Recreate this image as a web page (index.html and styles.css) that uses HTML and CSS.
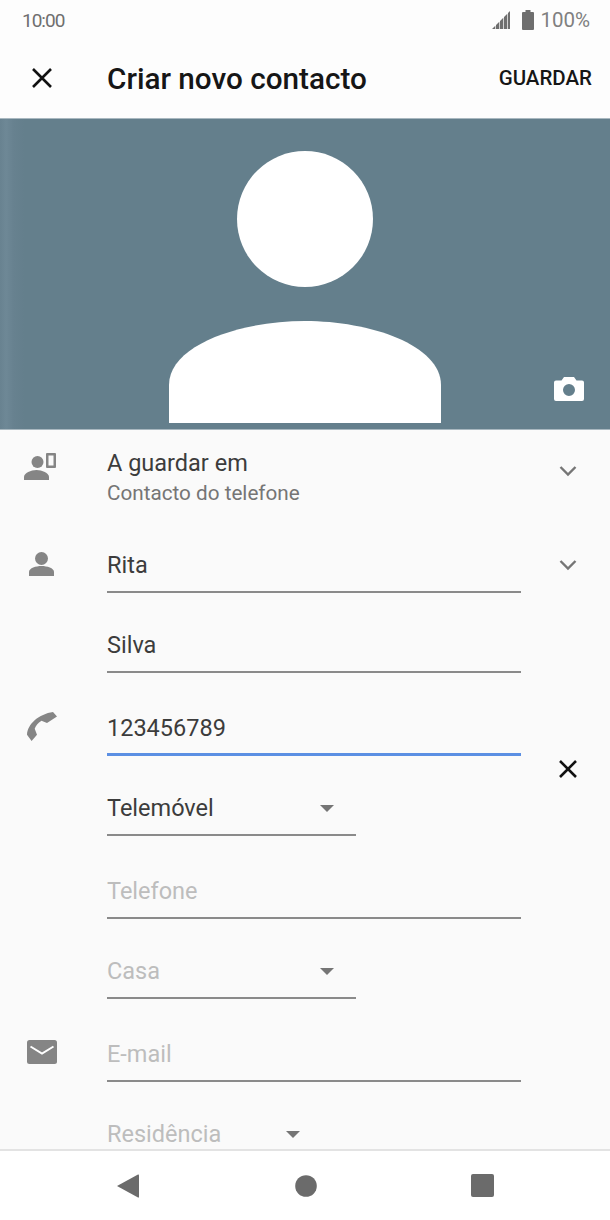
FILE: index.html
```html
<!DOCTYPE html>
<html>
<head>
  <meta charset="utf-8">
  <title>Criar novo contacto</title>
  <link rel="stylesheet" href="styles.css">
</head>
<body>
<div class="phone">
  <div class="statusbar">
    <span class="time">10:00</span>
    <div class="status-right">
      <svg class="sig" width="18" height="18" viewBox="0 0 18 18">
        <path d="M0 18 L3.300 14.700 V18 Z M4 14 L7.300 10.700 V18 H4 Z M8 10 L11.300 6.700 V18 H8 Z M12 6 L15.300 2.700 V18 H12 Z M16 2 L18 0 V18 H16 Z" fill="#6e6e6e"/>
      </svg>
      <svg class="batt" width="12" height="20" viewBox="0 0 12 20">
        <path d="M3.500 0 H8.500 V2 H11 Q12 2 12 3 V19 Q12 20 11 20 H1 Q0 20 0 19 V3 Q0 2 1 2 H3.500 Z" fill="#6e6e6e"/>
      </svg>
      <span class="pct">100%</span>
    </div>
  </div>

  <div class="toolbar">
    <svg class="close" width="22" height="22" viewBox="0 0 22 22">
      <path d="M2 2 L20 20 M20 2 L2 20" stroke="#111" stroke-width="2.600" fill="none"/>
    </svg>
    <h1 class="title">Criar novo contacto</h1>
    <span class="save">GUARDAR</span>
  </div>

  <div class="hero">
    <svg class="avatar" width="272" height="272" viewBox="0 0 272 272">
      <circle cx="136" cy="68" r="68" fill="#fff"/>
      <path d="M0 272 V234 C0 194 71 170 136 170 C201 170 272 194 272 234 V272 Z" fill="#fff"/>
    </svg>
    <svg class="camera" width="30" height="24" viewBox="0 0 30 24">
      <path fill-rule="evenodd" d="M10 0 H20 L22.500 3.500 H28 Q30 3.500 30 5.500 V22 Q30 24 28 24 H2 Q0 24 0 22 V5.500 Q0 3.500 2 3.500 H7.500 Z M15 7 A6 6 0 1 0 15 19 A6 6 0 1 0 15 7 Z" fill="#fff"/>
    </svg>
  </div>

  <div class="form">
    <div class="group account">
      <svg class="icon icon-account" width="33" height="27" viewBox="0 0 33 27">
        <circle cx="13.500" cy="9" r="6" fill="#858585"/>
        <path d="M0 27 V24 C0 20 7 17 12.500 17 C18 17 25 20 25 24 V27 Z" fill="#858585"/>
        <path fill-rule="evenodd" d="M22 1 Q22 0 23 0 H31 Q32 0 32 1 V14 Q32 15 31 15 H23 Q22 15 22 14 Z M24.500 2.500 V12.500 H29.500 V2.500 Z" fill="#858585"/>
      </svg>
      <div class="account-text">
        <div class="account-label">A guardar em</div>
        <div class="account-sub">Contacto do telefone</div>
      </div>
      <svg class="chevron" width="18" height="12" viewBox="0 0 18 12">
        <path d="M1.500 2 L9 9.500 L16.500 2" stroke="#757575" stroke-width="2.400" fill="none"/>
      </svg>
    </div>

    <div class="group">
      <svg class="icon icon-person" width="25" height="24" viewBox="0 0 25 24">
        <circle cx="12.500" cy="6.500" r="6.500" fill="#858585"/>
        <path d="M0 24 V20 C0 16 7 14 12.500 14 C18 14 25 16 25 20 V24 Z" fill="#858585"/>
      </svg>
      <div class="field">Rita</div>
      <svg class="chevron" width="18" height="12" viewBox="0 0 18 12">
        <path d="M1.500 2 L9 9.500 L16.500 2" stroke="#757575" stroke-width="2.400" fill="none"/>
      </svg>
      <div class="field second">Silva</div>
    </div>

    <div class="group phone-group">
      <svg class="icon icon-phone" width="30" height="29" viewBox="0 0 30 29">
        <path d="M26 0 L30 4.500 L20 11 L14.500 8.700 C11 11 8.500 14 7.700 16.700 L10 22.700 L4.600 29 L0 22.700 C0.500 12 12 2 26 0 Z" fill="#858585"/>
      </svg>
      <div class="field active">123456789</div>
      <svg class="clear" width="20" height="20" viewBox="0 0 20 20">
        <path d="M2 2 L18 18 M18 2 L2 18" stroke="#111" stroke-width="2.600" fill="none"/>
      </svg>
      <div class="field select second">Telemóvel<span class="arrow"></span></div>
    </div>

    <div class="group">
      <div class="field empty">Telefone</div>
      <div class="field select empty second">Casa<span class="arrow"></span></div>
    </div>

    <div class="group">
      <svg class="icon icon-mail" width="30" height="24" viewBox="0 0 30 24">
        <rect width="30" height="24" rx="2.500" fill="#858585"/>
        <path d="M3.500 6.500 L15 13.500 L26.500 6.500" stroke="#fff" stroke-width="2" fill="none"/>
      </svg>
      <div class="field empty">E-mail</div>
      <div class="field select narrow empty second">Residência<span class="arrow"></span></div>
    </div>
  </div>

  <div class="navbar">
    <svg width="22" height="24" viewBox="0 0 22 24"><path d="M21 0.500 Q22 0 22 1.500 V22.500 Q22 24 21 23.500 L0 12 Z" fill="#6b6b6b"/></svg>
    <svg class="nav-home" width="22" height="22" viewBox="0 0 22 22"><circle cx="11" cy="11" r="10.800" fill="#6b6b6b"/></svg>
    <svg width="23" height="23" viewBox="0 0 23 23"><rect width="23" height="23" rx="2" fill="#6b6b6b"/></svg>
  </div>
</div>
</body>
</html>
```

FILE: styles.css
```css
* {
  box-sizing: border-box;
}
body {
  margin: 0;
  font-family: Roboto, "Liberation Sans", sans-serif;
}
.phone {
  width: 610px;
  height: 1220px;
  display: flex;
  flex-direction: column;
  background-color: #fafafa;
  overflow: hidden;
}

/* top bars */
.statusbar {
  height: 40px;
  flex: none;
  padding: 0 20px 0 22px;
  display: flex;
  justify-content: space-between;
  align-items: center;
  background-color: #fdfdfd;
}
.time {
  font-size: 19px;
  letter-spacing: -1px;
  color: #6f6f6f;
}
.status-right {
  display: flex;
  align-items: center;
}
.batt {
  margin-left: 12px;
}
.pct {
  margin-left: 6px;
  font-size: 20.500px;
  color: #808080;
}
.toolbar {
  height: 78px;
  flex: none;
  padding: 0 18px 2px 31px;
  display: flex;
  align-items: center;
  background-color: #fdfdfd;
}
.title {
  margin: 0 0 0 54px;
  flex: 1;
  font-size: 29.700px;
  font-weight: 500;
  color: #161616;
}
.save {
  font-size: 20.500px;
  font-weight: 500;
  color: #161616;
}

/* contact picture */
.hero {
  height: 312px;
  flex: none;
  position: relative;
  padding-top: 32px;
  display: flex;
  justify-content: center;
  background: linear-gradient(90deg, #688290 0, #6e8896 6px, #67818f 14px, #647f8c 24px);
  border-top: 1px solid #a9b8c0;
  border-bottom: 1px solid #a9b8c0;
}
.camera {
  position: absolute;
  left: 554px;
  top: 258px;
}

/* form */
.form {
  flex: 1;
  min-height: 0;
  overflow: hidden;
}
.group {
  display: grid;
  grid-template-columns: 107px 414px 1fr;
}
.account {
  height: 83px;
  padding-top: 18px;
}
.group + .group {
  margin-top: 29px;
}
.account + .group {
  margin-top: 26px;
}
.icon {
  grid-column: 1;
  grid-row: 1;
}
.icon-account {
  margin: 5px 0 0 24px;
}
.icon-person {
  margin: 13px 0 0 29px;
}
.icon-phone {
  margin: 10px 0 0 27px;
}
.icon-mail {
  margin: 12px 0 0 27px;
}
.account-text {
  grid-column: 2;
}
.account-label {
  font-size: 23.500px;
  line-height: 30px;
  color: #3c3c3c;
}
.account-sub {
  font-size: 20.700px;
  line-height: 30px;
  color: #757575;
}
.chevron {
  grid-column: 3;
  grid-row: 1;
  margin: 20px 0 0 38px;
}
.account .chevron {
  margin-top: 17px;
}
.field {
  grid-column: 2;
  height: 54px;
  display: flex;
  align-items: center;
  border-bottom: 2px solid #8a8a8a;
  font-size: 23.500px;
  color: #3c3c3c;
}
.second {
  margin-top: 26px;
}
.active {
  border-bottom: 3px solid #5b8fe3;
}
.empty {
  color: #bdbdbd;
}
.select {
  width: 249px;
  position: relative;
}
.narrow {
  width: 215px;
}
.arrow {
  position: absolute;
  right: 22px;
  top: 23px;
  border-left: 7.500px solid transparent;
  border-right: 7.500px solid transparent;
  border-top: 7.500px solid #757575;
}
.clear {
  grid-column: 3;
  grid-row: 1 / 3;
  align-self: center;
  margin-left: 37px;
}

/* bottom bar */
.navbar {
  height: 71px;
  flex: none;
  padding-left: 117px;
  display: flex;
  align-items: center;
  background-color: #fff;
  border-top: 2px solid #e3e3e3;
}
.nav-home {
  margin: 0 154px 0 156px;
}
```
